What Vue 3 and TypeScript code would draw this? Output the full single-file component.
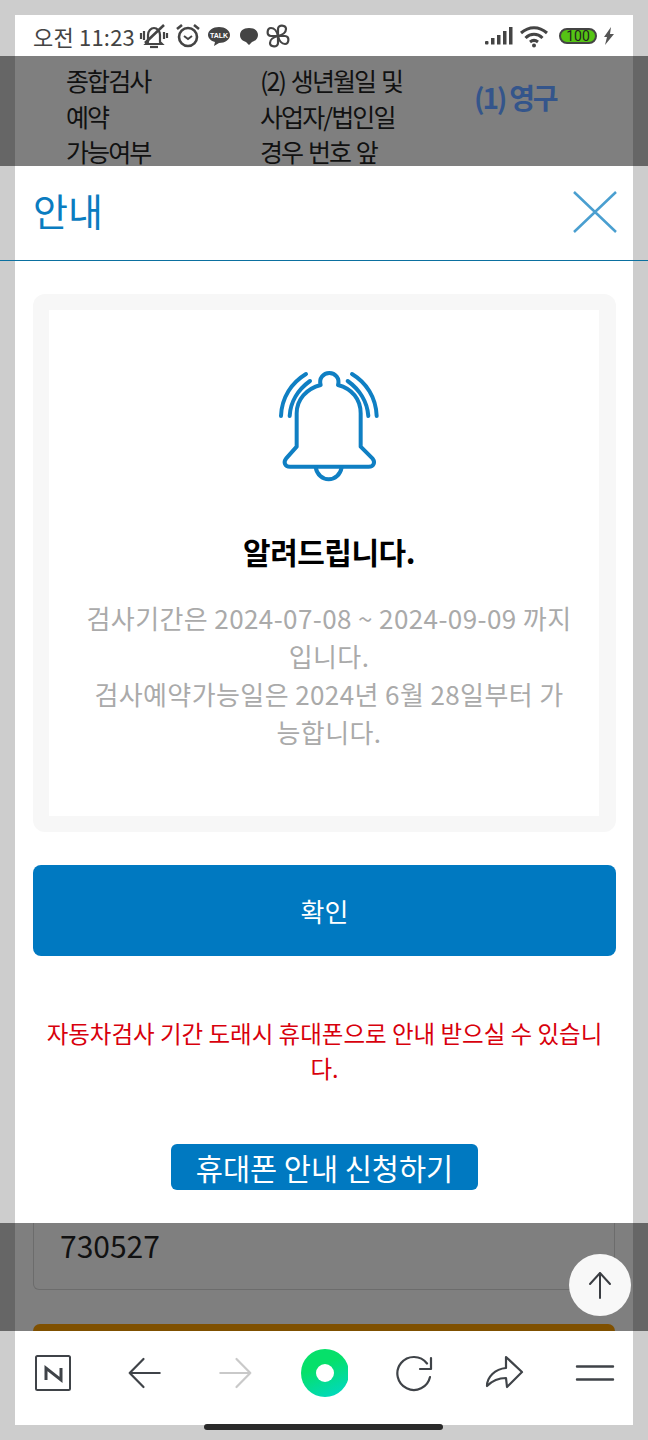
<script setup lang="ts">
const col1: string[] = ['종합검사', '예약', '가능여부']
const col2: string[] = ['(2) 생년월일 및', '사업자/법인일', '경우 번호 앞']
const lobes: number[] = [0, 90, 180, 270]
</script>

<template>
  <div class="screen">
    <header class="status">
      <div class="status-left">
        <span class="clock">오전 11:23</span>
        <svg class="si mute" width="30" height="28" viewBox="0 0 30 28" fill="none" stroke="#444" stroke-width="2.200">
          <path d="M9 20V13c0-4 3-7 6-7s6 3 6 7v7l2 2H7z" />
          <path d="M11 25h8" />
          <path d="M6 21L25 3" stroke-width="2.600" />
          <path d="M2 11v6M5 9v9M25 10v7M28 11v5" />
        </svg>
        <svg class="si" width="26" height="28" viewBox="0 0 26 28" fill="none" stroke="#444" stroke-width="2.600">
          <circle cx="13" cy="15" r="9" />
          <path d="M9 14l4 3 4-3" stroke-width="2" />
          <path d="M2 7l5-4M24 7l-5-4" />
        </svg>
        <svg class="si" width="24" height="24" viewBox="0 0 24 24">
          <path d="M12 3c6 0 11 3.500 11 8s-5 8-11 8l-5 3 1-4c-4-1-7-4-7-7 0-4.500 5-8 11-8z" fill="#444" />
          <text x="12" y="13.500" class="talk" text-anchor="middle">TALK</text>
        </svg>
        <svg class="si bubble" width="20" height="24" viewBox="0 0 20 24">
          <path d="M10 4c6 0 9 3 9 7s-3 6-6 7l-3 3-3-3c-3-1-6-3-6-7s3-7 9-7z" fill="#444" />
        </svg>
        <svg class="si" width="24" height="26" viewBox="0 0 24 26" fill="none" stroke="#444" stroke-width="2.200" stroke-linejoin="round">
          <path v-for="a in lobes" :key="a" d="M12 13V6c0-5 8-4 8 0 0 3-3 6-8 7z" :transform="`rotate(${a} 12 13)`" />
        </svg>
      </div>
      <div class="status-right">
        <svg width="30" height="20" viewBox="-2 0 30 20" fill="#444">
          <rect x="0" y="15" width="3.500" height="3.500" rx="1" />
          <rect x="6" y="12" width="3.500" height="6.500" />
          <rect x="12" y="9" width="3.500" height="9.500" />
          <rect x="18" y="5" width="3.500" height="13.500" />
          <rect x="24" y="1" width="3.500" height="17.500" />
        </svg>
        <svg width="30" height="24" viewBox="0 0 30 24" fill="none" stroke="#444" stroke-width="3">
          <path d="M2 9c8-7 18-7 26 0" />
          <path d="M6.500 14c5-5 12-5 17 0" />
          <path d="M11 18c2.500-2 5.500-2 8 0" />
          <circle cx="15" cy="21.500" r="2" fill="#444" stroke="none" />
        </svg>
        <div class="battery"><span>100</span></div>
        <svg width="12" height="20" viewBox="0 0 12 20" fill="#555">
          <path d="M8 1L1 11h3l-2 8 9-11H7z" />
        </svg>
      </div>
    </header>

    <section class="band band-top">
      <div class="band-inner top-grid">
        <div class="lines">
          <span v-for="t in col1" :key="t">{{ t }}</span>
        </div>
        <div class="lines">
          <span v-for="t in col2" :key="t">{{ t }}</span>
        </div>
        <div class="permanent">(1) 영구</div>
      </div>
    </section>

    <main class="modal">
      <div class="modal-head">
        <h1>안내</h1>
        <svg class="close" width="44" height="44" viewBox="0 0 44 44" stroke="#4a9fd0" stroke-width="2.500" fill="none">
          <path d="M1 2l42 40M43 2L1 42" />
        </svg>
      </div>
      <div class="modal-body">
        <div class="card">
          <div class="card-inner">
            <svg class="bell" width="150" height="150" viewBox="12 0 450 450" fill="none" stroke="#0f7fc3" stroke-width="12" stroke-linecap="round" stroke-linejoin="round">
              <path d="M108 326l32-36V190c0-42 30-74 72-85 -6-20 8-36 26-36s32 16 26 36c42 11 68 43 68 85v100l36 36c8 10 4 24-12 24H120c-16 0-20-14-12-24z" />
              <path d="M197 352c4 22 20 36 39 36s35-14 39-36" />
              <path d="M93 198c2-56 32-100 75-126" />
              <path d="M119 198c2-42 26-80 61-105" />
              <path d="M293 93c35 25 59 63 62 105" />
              <path d="M306 72c43 26 72 70 74 126" />
            </svg>
            <h2>알려드립니다.</h2>
            <p>검사기간은 2024-07-08 ~ 2024-09-09 까지입니다.<br />검사예약가능일은 2024년 6월 28일부터 가능합니다.</p>
          </div>
        </div>
        <button class="confirm" type="button">확인</button>
        <p class="notice">자동차검사 기간 도래시 휴대폰으로 안내 받으실 수 있습니다.</p>
        <button class="apply" type="button">휴대폰 안내 신청하기</button>
      </div>
    </main>

    <section class="band band-bottom">
      <div class="band-inner bottom-inner">
        <div class="input-box">730527</div>
        <div class="orange"></div>
      </div>
      <button class="to-top" type="button" aria-label="위로">
        <svg width="26" height="30" viewBox="0 0 26 30" fill="none" stroke="#3a3d42" stroke-width="2" stroke-linecap="round" stroke-linejoin="round">
          <path d="M13 28V3M3 14L13 3l10 11" />
        </svg>
      </button>
    </section>

    <nav class="nav">
      <svg width="48" height="38" viewBox="-5 0 48 38" fill="none" stroke="#3f4348">
        <rect x="2" y="2" width="34" height="34" rx="1.500" stroke-width="2" />
        <path d="M12 26V14L27 26V14" stroke-width="3" />
      </svg>
      <svg width="48" height="38" viewBox="-5 0 48 38" fill="none" stroke="#3f4348" stroke-width="2.200" stroke-linecap="round" stroke-linejoin="round">
        <path d="M35.700 19H5.700M19.500 5L5.700 19l13.800 14" />
      </svg>
      <svg width="48" height="38" viewBox="-5 0 48 38" fill="none" stroke="#c9c9c9" stroke-width="2.200" stroke-linecap="round" stroke-linejoin="round">
        <path d="M5.300 19h30M21.500 5l13.800 14-13.800 14" />
      </svg>
      <svg class="ring" width="48" height="48" viewBox="-1 0 48 48">
        <defs>
          <linearGradient id="ringGrad" x1="0.350" y1="0.100" x2="0.750" y2="1">
            <stop offset="0.250" stop-color="#06e06a" />
            <stop offset="1" stop-color="#00d8c0" />
          </linearGradient>
        </defs>
        <circle cx="24" cy="24" r="24" fill="url(#ringGrad)" />
        <circle cx="24" cy="24" r="9" fill="#fff" />
      </svg>
      <svg width="48" height="38" viewBox="-5 0 48 38" fill="none" stroke="#3f4348" stroke-width="2.200" stroke-linecap="round" stroke-linejoin="round">
        <path d="M35 23a16.500 16.500 0 1 1-3-13.500" />
        <path d="M36 4v11H25" />
      </svg>
      <svg width="48" height="38" viewBox="-5 0 48 38" fill="none" stroke="#3f4348" stroke-width="2.200" stroke-linecap="round" stroke-linejoin="round">
        <path d="M20 3l16 15-15 15-1-9C12 24 6 27 1 32c0-9 8-17 19-18z" />
      </svg>
      <svg width="48" height="38" viewBox="-5 0 48 38" fill="none" stroke="#3f4348" stroke-width="2.400" stroke-linecap="round">
        <path d="M1 12.500h36M1 25.500h36" />
      </svg>
    </nav>
    <div class="home-bar"></div>
  </div>
</template>

<style>
html, body { margin: 0; background: #ccc; }
</style>

<style scoped>
.screen {
  position: relative;
  width: 648px;
  height: 1440px;
  box-sizing: border-box;
  padding-top: 15px;
  background: #cdcdcd;
  overflow: hidden;
  font-family: "Noto Sans CJK KR", "Noto Sans", sans-serif;
  display: flex;
  flex-direction: column;
}
.status {
  height: 41px;
  margin: 0 15px;
  padding: 0 18px 0 18px;
  box-sizing: border-box;
  background: #fff;
  display: flex;
  justify-content: space-between;
  align-items: center;
  overflow: hidden;
}
.status-left, .status-right { display: flex; align-items: center; }
.status-left { gap: 6px; }
.status-right { gap: 6px; }
.clock {
  font-family: "Noto Sans CJK KR", Roboto, sans-serif;
  font-size: 22px;
  color: #444;
  white-space: nowrap;
  letter-spacing: 0.2px;
}
.mute { margin-left: -2px; }
.bubble { margin: 0 1px 0 2px; }
.talk { font: 700 7px "Liberation Sans", sans-serif; fill: #fff; }
.battery {
  width: 38px;
  height: 16px;
  box-sizing: border-box;
  border: 2px solid #444;
  border-radius: 8px;
  background: #55c414;
  display: flex;
  align-items: center;
  justify-content: center;
  margin-left: 4px;
}
.battery span {
  font: 400 14px/1 Roboto, sans-serif;
  color: #222;
}
.band {
  position: relative;
  background: #666;
  padding: 0 15px;
  flex: none;
}
.band-inner {
  height: 100%;
  background: #7f7f7f;
  overflow: hidden;
}
.band-top { height: 110px; }
.top-grid {
  display: grid;
  grid-template-columns: 194px 214px 1fr;
  padding-left: 51px;
  box-sizing: border-box;
}
.lines {
  display: flex;
  flex-direction: column;
  font-size: 25px;
  line-height: 35.5px;
  letter-spacing: -1.9px;
  word-spacing: 2px;
  color: #111;
  margin-top: 7px;
  white-space: nowrap;
}
.permanent {
  font-size: 28px;
  font-weight: 700;
  letter-spacing: -2.2px;
  color: #34558b;
  line-height: 36px;
  margin-top: 23px;
  white-space: nowrap;
}
.modal {
  height: 1057px;
  margin: 0 15px;
  background: #fff;
  flex: none;
}
.modal-head {
  height: 95px;
  box-sizing: border-box;
  border-bottom: 1px solid #0b70a0;
  margin: 0 -15px;
  padding: 0 31px 0 33px;
  display: flex;
  align-items: center;
  justify-content: space-between;
}
.modal-head h1 {
  margin: 0;
  font-size: 38px;
  font-weight: 400;
  line-height: 1;
  color: #0a7cc0;
  position: relative;
  top: -3px;
}
.close { position: relative; top: -1px; }
.modal-body {
  padding: 33px 17px 0 18px;
  display: flex;
  flex-direction: column;
  align-items: center;
}
.card {
  width: 100%;
  box-sizing: border-box;
  background: #f7f7f7;
  border-radius: 12px;
  padding: 16px 17px 16px 16px;
}
.card-inner {
  height: 506px;
  box-sizing: border-box;
  background: #fff;
  padding: 40px 25px 0 35px;
  display: flex;
  flex-direction: column;
  align-items: center;
  text-align: center;
}
.bell { flex: none; }
.card-inner h2 {
  margin: 29px 0 0;
  font-size: 30px;
  line-height: 44px;
  font-weight: 700;
  letter-spacing: -0.5px;
  color: #000;
}
.card-inner p {
  margin: 26px 0 0;
  font-size: 26px;
  line-height: 38px;
  letter-spacing: 0.4px;
  color: #aaa;
  font-weight: 400;
}
.confirm {
  width: 100%;
  height: 91px;
  margin-top: 33px;
  border: 0;
  border-radius: 8px;
  background: #0079c1;
  color: #fff;
  font: inherit;
  font-size: 26px;
  padding: 0;
}
.notice {
  margin: 60px 0 0;
  padding: 0 8px;
  font-size: 23.5px;
  line-height: 35px;
  color: #d8000c;
  text-align: center;
}
.apply {
  width: 307px;
  height: 46px;
  margin-top: 58px;
  border: 0;
  border-radius: 6px;
  background: #0079c1;
  color: #fff;
  font: inherit;
  font-size: 29.5px;
  line-height: 46px;
  padding: 0;
  white-space: nowrap;
}
.band-bottom { height: 108px; }
.bottom-inner {
  padding: 0 18px;
  box-sizing: border-box;
  display: flex;
  flex-direction: column;
}
.input-box {
  height: 67px;
  box-sizing: border-box;
  border: 1px solid #6c6c6c;
  border-top: 0;
  border-radius: 0 0 6px 6px;
  padding-left: 26px;
  font-size: 30px;
  line-height: 44px;
  color: #111;
  flex: none;
}
.orange {
  height: 7px;
  margin-top: 34px;
  background: #7f5000;
  border-radius: 8px 8px 0 0;
  flex: none;
}
.to-top {
  position: absolute;
  left: 569px;
  top: 31px;
  width: 62px;
  height: 62px;
  border: 0;
  padding: 0;
  border-radius: 50%;
  background: #f8f8f8;
  display: flex;
  align-items: center;
  justify-content: center;
}
.nav {
  height: 94px;
  margin: 0 15px;
  padding: 0 14px 10px;
  box-sizing: border-box;
  background: #fff;
  display: flex;
  justify-content: space-between;
  align-items: center;
  flex: none;
}
.home-bar {
  position: absolute;
  left: 204px;
  top: 1424px;
  width: 239px;
  height: 6px;
  border-radius: 3px;
  background: #2a2a2a;
}
</style>
